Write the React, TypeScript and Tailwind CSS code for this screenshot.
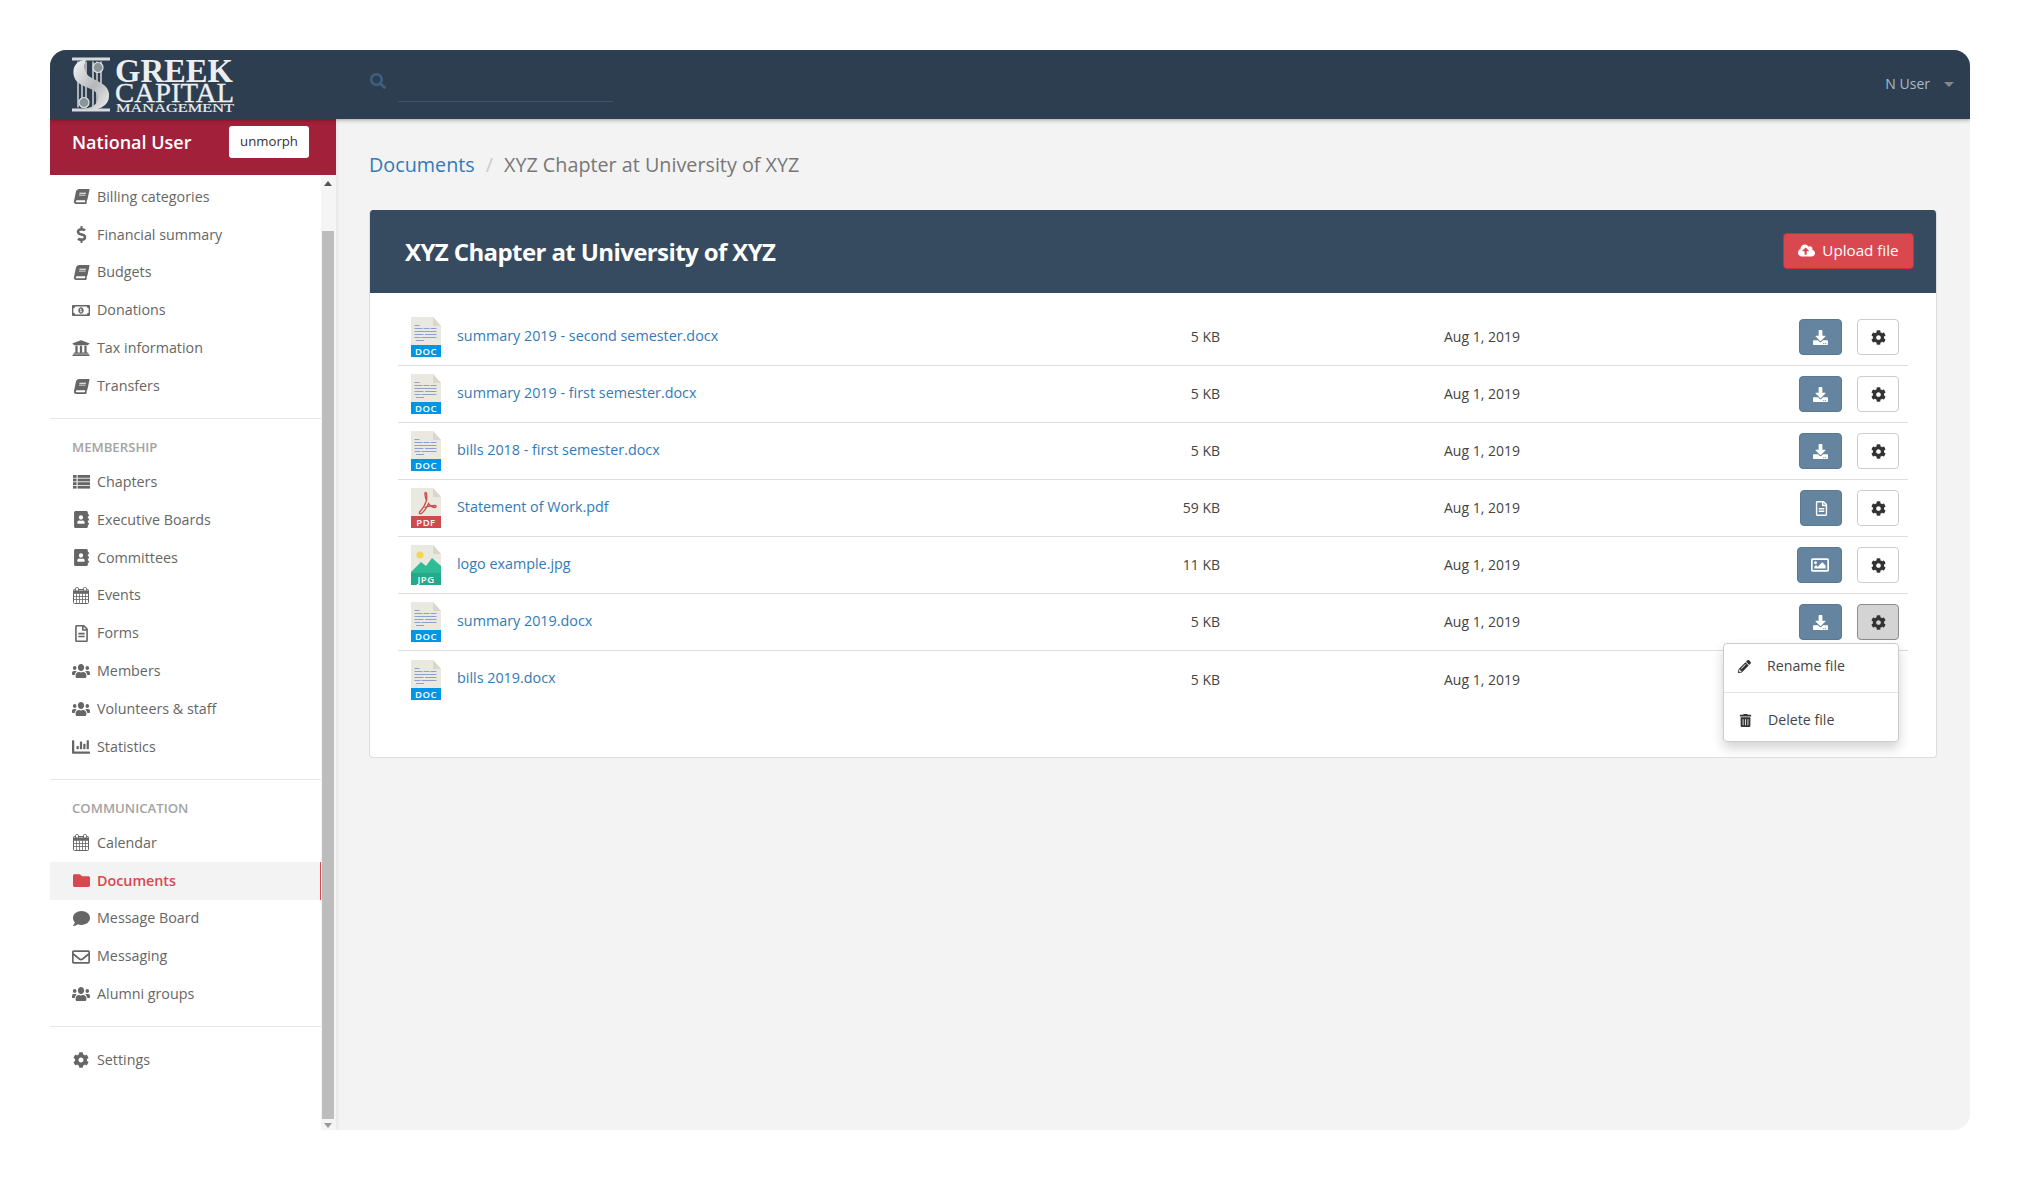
import React from 'react';
import {
  FaAddressBook,
  FaBook,
  FaChartBar,
  FaCloudUploadAlt,
  FaCog,
  FaComment,
  FaDollarSign,
  FaDownload,
  FaFolder,
  FaPencilAlt,
  FaRegEnvelope,
  FaRegFileAlt,
  FaRegImage,
  FaRegMoneyBillAlt,
  FaSearch,
  FaTrashAlt,
  FaUniversity,
  FaUsers,
} from 'react-icons/fa';

type NavEntry = { label: string; icon: React.ReactNode; active?: boolean };
type FileKind = 'doc' | 'pdf' | 'jpg';
type FileRow = { name: string; size: string; kind: FileKind };

const CalendarIcon = () => (
  <svg width="16" height="17" viewBox="0 0 16 17" fill="none" stroke="currentColor">
    <rect x="0.5" y="2.5" width="15" height="14" rx="1" />
    <path d="M0.5 6.5H15.5M0.5 9.5H15.5M0.5 12.5H15.5M3.5 6.5V16.5M6.5 6.5V16.5M9.5 6.5V16.5M12.5 6.5V16.5" strokeWidth="0.8" />
    <rect x="2.5" y="0.5" width="3" height="4" rx="1.2" fill="#fff" />
    <rect x="10.5" y="0.5" width="3" height="4" rx="1.2" fill="#fff" />
    <path d="M0.5 3.5H2M6 3.5H10M14 3.5H15.5V6H0.5V3.5Z" fill="currentColor" stroke="none" />
  </svg>
);

const ListIcon = () => (
  <svg width="17" height="14" viewBox="0 0 17 14" fill="currentColor">
    {[0, 3.6, 7.2, 10.8].map((y) => (
      <g key={y}>
        <rect x="0" y={y} width="3.6" height="2.8" />
        <rect x="4.6" y={y} width="12.4" height="2.8" />
      </g>
    ))}
  </svg>
);

const bookIcon = <FaBook size={15} className="-skew-x-[12deg]" />;
const usersIcon = <FaUsers preserveAspectRatio="none" className="h-[16px] w-[18px]" />;

const financeNav: NavEntry[] = [
  { label: 'Billing categories', icon: bookIcon },
  { label: 'Financial summary', icon: <FaDollarSign size={17} /> },
  { label: 'Budgets', icon: bookIcon },
  { label: 'Donations', icon: <FaRegMoneyBillAlt size={19} /> },
  { label: 'Tax information', icon: <FaUniversity size={18} /> },
  { label: 'Transfers', icon: bookIcon },
];

const membershipNav: NavEntry[] = [
  { label: 'Chapters', icon: <ListIcon /> },
  { label: 'Executive Boards', icon: <FaAddressBook size={17} /> },
  { label: 'Committees', icon: <FaAddressBook size={17} /> },
  { label: 'Events', icon: <CalendarIcon /> },
  { label: 'Forms', icon: <FaRegFileAlt size={17} /> },
  { label: 'Members', icon: usersIcon },
  { label: 'Volunteers & staff', icon: usersIcon },
  { label: 'Statistics', icon: <FaChartBar size={18} /> },
];

const communicationNav: NavEntry[] = [
  { label: 'Calendar', icon: <CalendarIcon /> },
  { label: 'Documents', icon: <FaFolder size={17} />, active: true },
  { label: 'Message Board', icon: <FaComment size={17} /> },
  { label: 'Messaging', icon: <FaRegEnvelope size={18} /> },
  { label: 'Alumni groups', icon: usersIcon },
];

const files: FileRow[] = [
  { name: 'summary 2019 - second semester.docx', size: '5 KB', kind: 'doc' },
  { name: 'summary 2019 - first semester.docx', size: '5 KB', kind: 'doc' },
  { name: 'bills 2018 - first semester.docx', size: '5 KB', kind: 'doc' },
  { name: 'Statement of Work.pdf', size: '59 KB', kind: 'pdf' },
  { name: 'logo example.jpg', size: '11 KB', kind: 'jpg' },
  { name: 'summary 2019.docx', size: '5 KB', kind: 'doc' },
  { name: 'bills 2019.docx', size: '5 KB', kind: 'doc' },
];

// the logo is one drawing, so the three tight lines of lettering live in the svg
const Logo = () => (
  <svg width="164" height="69" viewBox="0 -6.5 164 69" className="ml-[22px] block">
    <defs>
      <linearGradient id="swoosh" x1="0" y1="0" x2="1" y2="1">
        <stop offset="0" stopColor="#f6f6f6" />
        <stop offset="0.55" stopColor="#b4b8bb" />
        <stop offset="1" stopColor="#eeeeee" />
      </linearGradient>
    </defs>
    <rect x="0" y="1" width="38" height="3" fill="#d8dadb" />
    <rect x="0" y="52" width="38" height="3" fill="#d8dadb" />
    <g fill="#aab0b4">
      <rect x="5" y="5" width="2" height="46" />
      <rect x="9" y="5" width="2" height="46" />
      <rect x="13" y="5" width="2" height="46" />
      <rect x="20" y="5" width="2" height="46" />
      <rect x="24" y="5" width="2" height="46" />
      <rect x="28" y="5" width="2" height="46" />
    </g>
    <circle cx="26" cy="11" r="5" fill="#8b9499" stroke="#dfe1e2" strokeWidth="1.2" />
    <circle cx="12" cy="46" r="5" fill="#8b9499" stroke="#dfe1e2" strokeWidth="1.2" />
    <path
      d="M14 3 C3 4 0 12 2 20 C4 28 14 30 20 33 C26 36 28 42 24 47 C21 51 14 52 6 53 L22 53 C32 52 38 46 37 37 C36 28 26 25 19 21 C13 18 11 11 14 3 Z"
      fill="url(#swoosh)"
    />
    <g fontFamily="'Liberation Serif', serif" fill="#eceeef">
      <text x="43" y="25" fontSize="33" fontWeight="700" textLength="118" lengthAdjust="spacingAndGlyphs">
        GREEK
      </text>
      <text x="43" y="45" fontSize="27" textLength="119" lengthAdjust="spacingAndGlyphs" stroke="#eceeef" strokeWidth="0.3">
        CAPITAL
      </text>
      <text x="44" y="55.5" fontSize="13.5" textLength="118" lengthAdjust="spacingAndGlyphs" stroke="#eceeef" strokeWidth="0.2">
        MANAGEMENT
      </text>
    </g>
  </svg>
);

const NavItem = ({ entry }: { entry: NavEntry }) => (
  <a
    className={`flex h-[37.86px] items-center pl-[22px] text-[14.3px] ${
      entry.active ? 'border-r border-[#d9474f] bg-[#f3f3f3] font-semibold text-[#d9474f]' : 'text-[#666]'
    }`}
  >
    <span className="mr-[7px] flex w-[18px] justify-center">{entry.icon}</span>
    <span className="-mt-px">{entry.label}</span>
  </a>
);

const NavTitle = ({ children }: { children: React.ReactNode }) => (
  <div className="mt-[17px] mb-[3px] flex h-[24px] items-center pl-[22px] text-[13.2px] font-semibold text-[#a3a3a3] uppercase">
    {children}
  </div>
);

const Sidebar = () => (
  <aside className="flex w-[286px] shrink-0 flex-col bg-white shadow-[2px_0_3px_rgba(0,0,0,0.05)]">
    <div className="flex h-[56px] justify-between bg-[#a3203a] pt-[7px] pr-[27px] pl-[22px]">
      <span className="text-[18px] leading-[32px] font-semibold text-white">National User</span>
      <button className="h-[32px] w-[80px] rounded-[3px] bg-white text-[13.2px] text-[#333]">unmorph</button>
    </div>
    <div className="flex min-h-0 flex-1">
      <nav className="w-[271px] pt-[3px]">
        {financeNav.map((entry) => (
          <NavItem key={entry.label} entry={entry} />
        ))}
        <div className="mt-[13px] h-px bg-[#e7e7e7]" />
        <NavTitle>Membership</NavTitle>
        {membershipNav.map((entry) => (
          <NavItem key={entry.label} entry={entry} />
        ))}
        <div className="mt-[13px] h-px bg-[#e7e7e7]" />
        <NavTitle>Communication</NavTitle>
        {communicationNav.map((entry) => (
          <NavItem key={entry.label} entry={entry} />
        ))}
        <div className="mt-[13px] h-px bg-[#e7e7e7]" />
        <div className="mt-[14px]">
          <NavItem entry={{ label: 'Settings', icon: <FaCog size={16} /> }} />
        </div>
      </nav>
      {/* fake scrollbar, the browser one is hidden in the headless shot */}
      <div className="flex w-[15px] flex-col items-center bg-[#f5f5f5] pr-[2px]">
        <div className="mt-[6px] h-0 w-0 border-x-[4px] border-b-[5px] border-x-transparent border-b-[#555]" />
        <div className="mt-[45px] h-[888px] w-[12px] bg-[#bdbdbd]" />
        <div className="mt-[4px] h-0 w-0 border-x-[4px] border-t-[5px] border-x-transparent border-t-[#999]" />
      </div>
    </div>
  </aside>
);

const DocLines = () => (
  <g fill="#8e9fd0">
    <rect x="3.5" y="8" width="5" height="1" />
    <rect x="3.5" y="11" width="8" height="1" />
    <rect x="12.5" y="11" width="6" height="1" />
    <rect x="19.5" y="11" width="6" height="1" />
    <rect x="3.5" y="14" width="22" height="1" />
    <rect x="3.5" y="17" width="9" height="1" />
    <rect x="14" y="17" width="11.5" height="1" />
    <rect x="3.5" y="20" width="6" height="1" />
    <rect x="10.5" y="20" width="15" height="1" />
    <rect x="5" y="23" width="8" height="1" />
  </g>
);

const FileIcon = ({ kind }: { kind: FileKind }) => {
  const band = kind === 'doc' ? '#0096e6' : kind === 'pdf' ? '#cc4b4c' : '#26a98a';
  return (
    <svg width="30" height="40" viewBox="0 0 30 40" className="ml-[13px] shrink-0">
      <path d="M0 0 H22 L30 9 V40 H0 Z" fill="#e9e9e0" />
      <path d="M22 0 L30 9 H22 Z" fill="#d9d7ca" />
      {kind === 'doc' && <DocLines />}
      {kind === 'pdf' && (
        <path
          d="M14.5 4.5 C13.5 4.5 14 9 15.5 12.5 C14 17 11.5 21 9 23.5 C7.5 25.5 9 26.5 11 25 C13.5 23 16 19 17.5 15.5 C19 17.5 21.5 19.5 24 19.5 C25.5 19.5 25.5 17.5 24 17.5 C21.5 17.5 18 18 13.5 19.5 M15.5 12.5 C16 9 16 4.5 14.5 4.5"
          fill="none"
          stroke="#cc4b4c"
          strokeWidth="1.3"
        />
      )}
      {kind === 'jpg' && (
        <>
          <circle cx="9" cy="10" r="3.6" fill="#f3d55b" />
          <path d="M0 27 L10 17 L15 21 L21 13 L30 21 V28 H0 Z" fill="#2fbb96" />
        </>
      )}
      <rect y="28" width="30" height="12" fill={band} />
      <text
        x="15"
        y="38"
        textAnchor="middle"
        fontSize="9.5"
        fill="#fff"
        fontWeight="600"
        fontFamily="'Open Sans', sans-serif"
        letterSpacing="0.5"
      >
        {kind.toUpperCase()}
      </text>
    </svg>
  );
};

const ViewButton = ({ kind }: { kind: FileKind }) => {
  const Icon = kind === 'pdf' ? FaRegFileAlt : kind === 'jpg' ? FaRegImage : FaDownload;
  const width = kind === 'pdf' ? 'w-[42px]' : kind === 'jpg' ? 'w-[45px]' : 'w-[43px]';
  return (
    <button className={`flex h-[36px] ${width} items-center justify-center rounded-[4px] border border-[#587893] bg-[#64849f] text-white`}>
      <Icon size={kind === 'jpg' ? 18 : 15} />
    </button>
  );
};

const FileMenu = () => (
  <div className="absolute top-[39px] right-0 z-20 flex h-[99px] w-[176px] flex-col rounded-[4px] border border-[#ccc] bg-white text-[14.2px] text-[#444] shadow-[0_6px_12px_rgba(0,0,0,0.175)]">
    <div className="flex h-[48px] items-center pb-[4px] pl-[14px]">
      <FaPencilAlt size={13} className="mr-[16px] text-[#333]" />
      Rename file
    </div>
    <div className="h-px bg-[#e5e5e5]" />
    <div className="flex flex-1 items-center pt-[6px] pl-[15px]">
      <FaTrashAlt size={13} className="mr-[16px] text-[#333]" />
      Delete file
    </div>
  </div>
);

const Row = ({ file, open, last }: { file: FileRow; open: boolean; last: boolean }) => (
  <div
    className={`grid h-[57px] grid-cols-[742px_80px_1fr_auto] items-center text-[14px] text-[#444] ${
      last ? '' : 'border-b border-[#ddd]'
    }`}
  >
    <div className="flex items-center gap-[16px]">
      <FileIcon kind={file.kind} />
      <a className="-mt-[3px] text-[14.35px] text-[#337ab7]">{file.name}</a>
    </div>
    <div className="-mt-px text-right">{file.size}</div>
    <div className="-mt-px pl-[224px]">Aug 1, 2019</div>
    <div className="flex items-center justify-end gap-[15px] pr-[9px]">
      <ViewButton kind={file.kind} />
      <div className="relative">
        <button
          className={`flex h-[36px] w-[42px] items-center justify-center rounded-[4px] border text-[#333] ${
            open ? 'border-[#8c8c8c] bg-[#d4d4d4]' : 'border-[#ccc] bg-white'
          }`}
        >
          <FaCog size={15} />
        </button>
        {open && <FileMenu />}
      </div>
    </div>
  </div>
);

export default function App() {
  return (
    <div className="bg-white p-[50px] font-['Open_Sans',sans-serif]">
      <div className="flex h-[1080px] w-[1920px] flex-col overflow-hidden rounded-[16px] bg-[#f3f3f3]">
        <header className="relative z-10 flex h-[69px] shrink-0 items-center bg-[#2c3e50] shadow-[0_1px_4px_rgba(0,0,0,0.35)]">
          <div className="w-[320px]">
            <Logo />
          </div>
          <FaSearch size={16} className="-mt-[8px] text-[#3f5f7f]" />
          <div className="mt-[4px] ml-[12px] h-[30px] w-[215px] border-b border-[#3b5673]" />
          <div className="ml-auto -mt-[2px] flex items-center pr-[16px] text-[14px] text-[#a9bccb]">
            N User
            <span className="mt-[2px] ml-[14px] h-0 w-0 border-x-[5px] border-t-[5px] border-x-transparent border-t-[#888]" />
          </div>
        </header>
        <div className="flex min-h-0 flex-1">
          <Sidebar />
          <main className="flex-1 px-[33px] pt-[31px]">
            <div className="mb-[30px] flex h-[30px] items-center text-[19.75px] text-[#777]">
              <a className="text-[#337ab7]">Documents</a>
              <span className="mx-[11px] text-[#ccc]">/</span>
              <span>XYZ Chapter at University of XYZ</span>
            </div>
            <section className="overflow-hidden rounded-[4px] border border-t-0 border-[#ddd] bg-white">
              <div className="-mx-px flex h-[83px] items-center justify-between bg-[#364b60] pr-[23px] pl-[36px]">
                <h1 className="text-[24px] font-bold tracking-[-0.6px] text-white">XYZ Chapter at University of XYZ</h1>
                <button className="-mt-[2px] flex h-[36px] w-[131px] items-center justify-center gap-[7px] rounded-[4px] border border-[#c9303a] bg-[#d9484f] text-[15.2px] text-white">
                  <FaCloudUploadAlt size={17} />
                  Upload file
                </button>
              </div>
              <div className="relative px-[28px] pt-[16px] pb-[49px]">
                {files.map((file, i) => (
                  <Row key={file.name} file={file} open={i === 5} last={i === files.length - 1} />
                ))}
              </div>
            </section>
          </main>
        </div>
      </div>
    </div>
  );
}
